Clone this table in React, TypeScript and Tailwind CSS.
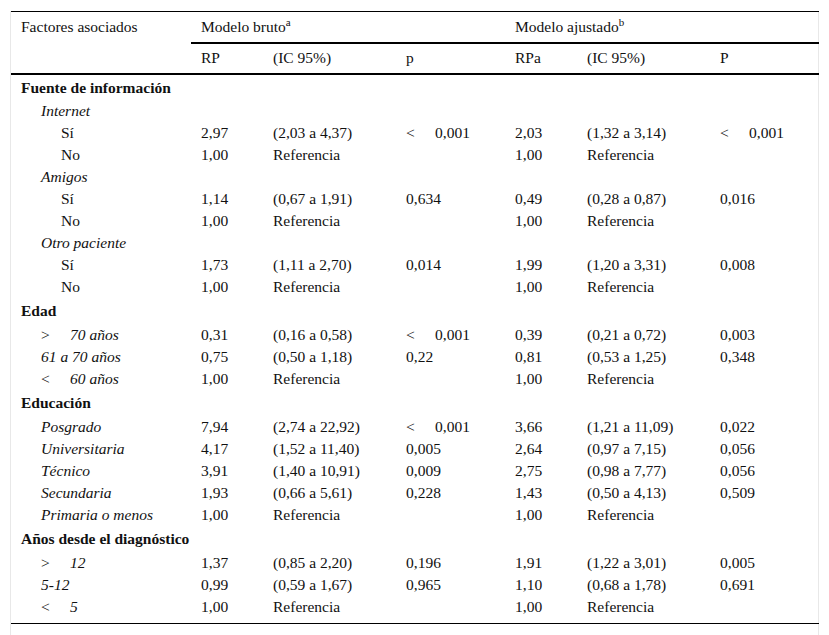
import React from "react";

type Row =
  | { kind: "h"; label: string; first?: boolean }
  | {
      kind: "d";
      label: React.ReactNode;
      indent: 1 | 2;
      italic?: boolean;
      rp?: string;
      ic?: string;
      p?: React.ReactNode;
      rpa?: string;
      ic2?: string;
      p2?: React.ReactNode;
    };

const Lt = ({ v, sym = "<" }: { v: string; sym?: string }) => (
  <span>
    <span className="inline-block w-[29px] not-italic">{sym}</span>
    {v}
  </span>
);

const rows: Row[] = [
  { kind: "h", label: "Fuente de información", first: true },
  { kind: "d", label: "Internet", indent: 1, italic: true },
  { kind: "d", label: "Sí", indent: 2, rp: "2,97", ic: "(2,03 a 4,37)", p: <Lt v="0,001" />, rpa: "2,03", ic2: "(1,32 a 3,14)", p2: <Lt v="0,001" /> },
  { kind: "d", label: "No", indent: 2, rp: "1,00", ic: "Referencia", rpa: "1,00", ic2: "Referencia" },
  { kind: "d", label: "Amigos", indent: 1, italic: true },
  { kind: "d", label: "Sí", indent: 2, rp: "1,14", ic: "(0,67 a 1,91)", p: "0,634", rpa: "0,49", ic2: "(0,28 a 0,87)", p2: "0,016" },
  { kind: "d", label: "No", indent: 2, rp: "1,00", ic: "Referencia", rpa: "1,00", ic2: "Referencia" },
  { kind: "d", label: "Otro paciente", indent: 1, italic: true },
  { kind: "d", label: "Sí", indent: 2, rp: "1,73", ic: "(1,11 a 2,70)", p: "0,014", rpa: "1,99", ic2: "(1,20 a 3,31)", p2: "0,008" },
  { kind: "d", label: "No", indent: 2, rp: "1,00", ic: "Referencia", rpa: "1,00", ic2: "Referencia" },
  { kind: "h", label: "Edad" },
  { kind: "d", label: <Lt sym=">" v="70 años" />, indent: 1, italic: true, rp: "0,31", ic: "(0,16 a 0,58)", p: <Lt v="0,001" />, rpa: "0,39", ic2: "(0,21 a 0,72)", p2: "0,003" },
  { kind: "d", label: "61 a 70 años", indent: 1, italic: true, rp: "0,75", ic: "(0,50 a 1,18)", p: "0,22", rpa: "0,81", ic2: "(0,53 a 1,25)", p2: "0,348" },
  { kind: "d", label: <Lt v="60 años" />, indent: 1, italic: true, rp: "1,00", ic: "Referencia", rpa: "1,00", ic2: "Referencia" },
  { kind: "h", label: "Educación" },
  { kind: "d", label: "Posgrado", indent: 1, italic: true, rp: "7,94", ic: "(2,74 a 22,92)", p: <Lt v="0,001" />, rpa: "3,66", ic2: "(1,21 a 11,09)", p2: "0,022" },
  { kind: "d", label: "Universitaria", indent: 1, italic: true, rp: "4,17", ic: "(1,52 a 11,40)", p: "0,005", rpa: "2,64", ic2: "(0,97 a 7,15)", p2: "0,056" },
  { kind: "d", label: "Técnico", indent: 1, italic: true, rp: "3,91", ic: "(1,40 a 10,91)", p: "0,009", rpa: "2,75", ic2: "(0,98 a 7,77)", p2: "0,056" },
  { kind: "d", label: "Secundaria", indent: 1, italic: true, rp: "1,93", ic: "(0,66 a 5,61)", p: "0,228", rpa: "1,43", ic2: "(0,50 a 4,13)", p2: "0,509" },
  { kind: "d", label: "Primaria o menos", indent: 1, italic: true, rp: "1,00", ic: "Referencia", rpa: "1,00", ic2: "Referencia" },
  { kind: "h", label: "Años desde el diagnóstico" },
  { kind: "d", label: <Lt sym=">" v="12" />, indent: 1, italic: true, rp: "1,37", ic: "(0,85 a 2,20)", p: "0,196", rpa: "1,91", ic2: "(1,22 a 3,01)", p2: "0,005" },
  { kind: "d", label: "5-12", indent: 1, italic: true, rp: "0,99", ic: "(0,59 a 1,67)", p: "0,965", rpa: "1,10", ic2: "(0,68 a 1,78)", p2: "0,691" },
  { kind: "d", label: <Lt v="5" />, indent: 1, italic: true, rp: "1,00", ic: "Referencia", rpa: "1,00", ic2: "Referencia" },
];

export default function App() {
  return (
    <div className="bg-white w-[829px] h-[635px] pt-[11px] pl-[10px] [font-family:Liberation_Serif,serif] text-[15.5px] text-[#111] leading-none">
      <div className="w-[809px] border-x border-[#e8e8e8] pb-[11px]">
        <table className="w-[808px] border-collapse table-fixed [font-family:Liberation_Serif,serif] text-[15.5px] text-[#111] leading-none">
          <colgroup>
            <col className="w-[180px]" />
            <col className="w-[72px]" />
            <col className="w-[133px]" />
            <col className="w-[109px]" />
            <col className="w-[72px]" />
            <col className="w-[133px]" />
            <col className="w-[109px]" />
          </colgroup>
          <thead>
            <tr className="h-[31px] border-t border-black">
              <th rowSpan={2} className="text-left font-normal align-top pl-[10px] pt-[7px]">Factores asociados</th>
              <th colSpan={3} className="text-left font-normal pl-[10px] border-b-2 border-black align-middle">
                Modelo bruto<sup className="text-[11px] relative -top-[6px]">a</sup>
              </th>
              <th colSpan={3} className="text-left font-normal pl-[10px] border-b-2 border-black align-middle">
                Modelo ajustado<sup className="text-[11px] relative -top-[6px]">b</sup>
              </th>
            </tr>
            <tr className="h-[31px] border-b-2 border-black">
              <th className="text-left font-normal pl-[10px]">RP</th>
              <th className="text-left font-normal pl-[10px]">(IC 95%)</th>
              <th className="text-left font-normal pl-[10px]">p</th>
              <th className="text-left font-normal pl-[10px]">RPa</th>
              <th className="text-left font-normal pl-[10px]">(IC 95%)</th>
              <th className="text-left font-normal pl-[10px]">P</th>
            </tr>
          </thead>
          <tbody className="border-b-[1.5px] border-black">
            {rows.map((r, i) =>
              r.kind === "h" ? (
                <tr key={i} className={r.first ? "h-[25px]" : "h-[26px]"}>
                  <td colSpan={7} className="pl-[10px] pt-[2px] font-bold">
                    {r.label}
                  </td>
                </tr>
              ) : (
                <tr key={i} className="h-[22px]">
                  <td className={`pt-[2px] ${r.indent === 1 ? "pl-[30px]" : "pl-[50px]"} ${r.italic ? "italic" : ""}`}>{r.label}</td>
                  <td className="pl-[10px] pt-[2px]">{r.rp}</td>
                  <td className="pl-[10px] pt-[2px]">{r.ic}</td>
                  <td className="pl-[10px] pt-[2px]">{r.p}</td>
                  <td className="pl-[10px] pt-[2px]">{r.rpa}</td>
                  <td className="pl-[10px] pt-[2px]">{r.ic2}</td>
                  <td className="pl-[10px] pt-[2px]">{r.p2}</td>
                </tr>
              )
            )}
            <tr className="h-[7px]"><td colSpan={7}></td></tr>
          </tbody>
        </table>
      </div>
    </div>
  );
}
